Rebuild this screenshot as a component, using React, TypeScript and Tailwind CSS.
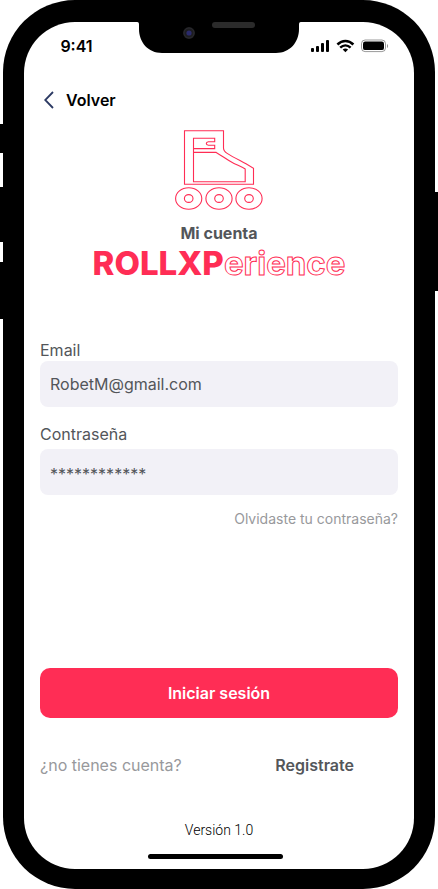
import React, { useState } from "react";

function Notch() {
  return (
    <svg viewBox="0 0 164 32" className="block h-8 w-[164px]" aria-hidden="true">
      <path d="M0 0C2 0 2 1 2 4V7C2 20 11 31 25 31H139C153 31 162 20 162 7V4C162 1 162 0 164 0Z" fill="#000" />
      <rect x="75" y="0" width="43" height="6" rx="3" fill="#2b2b2b" />
      <circle cx="52" cy="11" r="6" fill="#1c1c1f" />
      <circle cx="52" cy="11" r="5" fill="none" stroke="#2b2b30" />
      <circle cx="52" cy="11" r="2.6" fill="#2a2a6c" />
    </svg>
  );
}

function StatusIcons() {
  return (
    <svg viewBox="0 0 78 14" className="block h-[14px] w-[78px]" aria-hidden="true">
      <rect x="0" y="9" width="3" height="4" rx="1" />
      <rect x="5" y="7" width="3" height="6" rx="1" />
      <rect x="10" y="4" width="3" height="9" rx="1" />
      <rect x="15" y="1" width="3" height="12" rx="1" />
      <g fill="none" stroke="#000" strokeWidth="2.5">
        <path d="M26.4 5.5C31.2 .9 37.6 .9 42.4 5.5" />
        <path d="M29.2 8.7C32.4 5.7 36.4 5.7 39.6 8.7" />
      </g>
      <path d="M31.7 10.5C33.4 9.1 35.4 9.1 37.1 10.5L34.4 13.2Z" />
      <rect x="50.5" y="1" width="24" height="11.6" rx="3.6" fill="none" stroke="#000" strokeOpacity=".4" />
      <rect x="52" y="2.5" width="21" height="8.6" rx="2.2" />
      <path d="M76 5V9C77.4 8.3 77.4 5.7 76 5Z" fillOpacity=".45" />
    </svg>
  );
}

function SkateLogo() {
  return (
    <svg viewBox="175 130 88 80" className="h-20 w-[88px]" fill="none" stroke="#ff2d55" strokeWidth="1.1" role="img" aria-label="Patín">
      <path d="M184.5 130.7H223.5V148C223.5 151 225 152 227.5 153.6C233 157 240 160.5 246 163.8L253.5 168.2V184.3H184.5Z" />
      <path d="M193.5 138.2H214.7V141.7H208.4C205.6 142 205.6 145 208.4 145.3H214.7V148.6H193.5Z" />
      <path d="M193.5 148.6V181.7H245.2V169C242 167 238 165.4 234 163.4C227 160 222.5 156 216.2 152.4H193.5" />
      {[188.7, 219, 249].map((cx) => (
        <g key={cx}>
          <ellipse cx={cx} cy="198.5" rx="13.1" ry="10.8" />
          <ellipse cx={cx} cy="198.5" rx="4.3" ry="3.9" />
        </g>
      ))}
    </svg>
  );
}

const fieldClass =
  "block h-[46px] w-full rounded-lg bg-[#f2f1f7] px-[10px] text-base text-[#53565a] outline-none";
const labelClass = "block text-base leading-[22px] text-[#53565a]";

export default function App() {
  const [email, setEmail] = useState("RobetM@gmail.com");
  const [password, setPassword] = useState("************");

  return (
    <div className="relative min-h-screen bg-white px-[3px] font-['Inter','Liberation_Sans',sans-serif]">
      <div className="absolute left-0 top-[124px] h-[29px] w-1 bg-black" />
      <div className="absolute left-0 top-[187px] h-[55px] w-1 bg-black" />
      <div className="absolute left-0 top-[262px] h-[57px] w-1 bg-black" />
      <div className="absolute right-0 top-[192px] h-[99px] w-1 bg-black" />

      <div className="flex min-h-screen flex-col rounded-[72px] bg-black px-[21px] pb-5 pt-[22px]">
        <main className="flex flex-1 flex-col rounded-[51px] bg-white">
          <header className="grid h-12 grid-cols-[1fr_164px_1fr]">
            <div className="flex items-center justify-center pr-2">
              <time className="text-base font-semibold text-black">9:41</time>
            </div>
            <Notch />
            <div className="flex items-center justify-center pr-4">
              <StatusIcons />
            </div>
          </header>

          <nav className="flex h-[60px] items-center px-5">
            <button type="button" className="flex items-center gap-3 text-base font-semibold text-black">
              <svg viewBox="0 0 10 18" className="h-[18px] w-[10px]" fill="none" stroke="#2c3a63" strokeWidth="1.8" aria-hidden="true">
                <path d="M9 1L1.2 9L9 17" />
              </svg>
              Volver
            </button>
          </nav>

          <section className="flex flex-col items-center">
            <SkateLogo />
            <h2 className="mt-[11px] text-base font-bold leading-6 text-[#53565a]">Mi cuenta</h2>
            <h1 className="whitespace-nowrap text-[33px] font-bold leading-9 text-[#ff2d55]">
              <span className="font-extrabold">ROLLXP</span>
              <span className="text-white [-webkit-text-stroke:1px_#ff2d55]">erience</span>
            </h1>
          </section>

          <form className="mt-[58px] flex flex-1 flex-col px-4" onSubmit={(e) => e.preventDefault()}>
            <label htmlFor="email" className={labelClass}>Email</label>
            <input id="email" type="email" value={email} onChange={(e) => setEmail(e.target.value)} className={fieldClass} />
            <label htmlFor="password" className={`mt-4 mb-1 ${labelClass}`}>Contraseña</label>
            <input id="password" type="text" autoComplete="off" value={password} onChange={(e) => setPassword(e.target.value)} className={`pt-1 ${fieldClass}`} />
            <a href="#recuperar" className="mt-[14px] self-end text-sm leading-5 text-[#98999c]">Olvidaste tu contraseña?</a>
            <button type="submit" className="mt-auto h-[50px] rounded-[10px] bg-[#ff2d55] text-base font-semibold text-white">
              Iniciar sesión
            </button>
          </form>

          <div className="mt-9 flex justify-between pl-4 pr-[60px] text-base leading-[22px]">
            <p className="text-[#98999c]">¿no tienes cuenta?</p>
            <a href="#registro" className="font-semibold text-[#53565a]">Registrate</a>
          </div>

          <footer className="mt-11 flex flex-col items-center pb-[10px]">
            <p className="font-['Roboto',sans-serif] text-sm font-light leading-5 text-black">Versión 1.0</p>
            <div className="mr-2 mt-[14px] h-[5px] w-[135px] rounded-full bg-black" />
          </footer>
        </main>
      </div>
    </div>
  );
}
